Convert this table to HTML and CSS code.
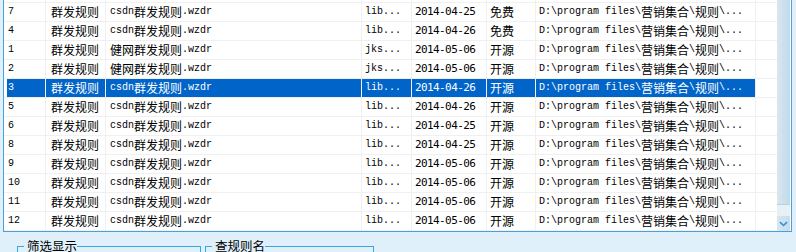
FILE: index.html
```html
<!DOCTYPE html>
<html lang="zh-CN">
<head>
<meta charset="utf-8">
<title>规则列表</title>
<link rel="stylesheet" href="styles.css">
</head>
<body>
<div class="listbox">
  <div class="rows">
    <div class="rows-inner">
      <div class="row"><div></div><div></div><div></div><div></div><div></div><div></div><div></div><div></div></div>
      <div class="row"><div>7</div><div><span class="c">群发规则</span></div><div>csdn<span class="c">群发规则</span>.wzdr</div><div>lib...</div><div><span class="d">2014-04-25</span></div><div><span class="c">免费</span></div><div>D:\program files\<span class="c">营销集合</span>\<span class="c">规则</span>\...</div><div></div></div>
      <div class="row"><div>4</div><div><span class="c">群发规则</span></div><div>csdn<span class="c">群发规则</span>.wzdr</div><div>lib...</div><div><span class="d">2014-04-26</span></div><div><span class="c">免费</span></div><div>D:\program files\<span class="c">营销集合</span>\<span class="c">规则</span>\...</div><div></div></div>
      <div class="row"><div>1</div><div><span class="c">群发规则</span></div><div><span class="c">健网群发规则</span>.wzdr</div><div>jks...</div><div><span class="d">2014-05-06</span></div><div><span class="c">开源</span></div><div>D:\program files\<span class="c">营销集合</span>\<span class="c">规则</span>\...</div><div></div></div>
      <div class="row"><div>2</div><div><span class="c">群发规则</span></div><div><span class="c">健网群发规则</span>.wzdr</div><div>jks...</div><div><span class="d">2014-05-06</span></div><div><span class="c">开源</span></div><div>D:\program files\<span class="c">营销集合</span>\<span class="c">规则</span>\...</div><div></div></div>
      <div class="row sel"><div>3</div><div><span class="c">群发规则</span></div><div>csdn<span class="c">群发规则</span>.wzdr</div><div>lib...</div><div><span class="d">2014-04-26</span></div><div><span class="c">开源</span></div><div>D:\program files\<span class="c">营销集合</span>\<span class="c">规则</span>\...</div><div></div></div>
      <div class="row"><div>5</div><div><span class="c">群发规则</span></div><div>csdn<span class="c">群发规则</span>.wzdr</div><div>lib...</div><div><span class="d">2014-04-26</span></div><div><span class="c">开源</span></div><div>D:\program files\<span class="c">营销集合</span>\<span class="c">规则</span>\...</div><div></div></div>
      <div class="row"><div>6</div><div><span class="c">群发规则</span></div><div>csdn<span class="c">群发规则</span>.wzdr</div><div>lib...</div><div><span class="d">2014-04-25</span></div><div><span class="c">开源</span></div><div>D:\program files\<span class="c">营销集合</span>\<span class="c">规则</span>\...</div><div></div></div>
      <div class="row"><div>8</div><div><span class="c">群发规则</span></div><div>csdn<span class="c">群发规则</span>.wzdr</div><div>lib...</div><div><span class="d">2014-04-25</span></div><div><span class="c">开源</span></div><div>D:\program files\<span class="c">营销集合</span>\<span class="c">规则</span>\...</div><div></div></div>
      <div class="row"><div>9</div><div><span class="c">群发规则</span></div><div>csdn<span class="c">群发规则</span>.wzdr</div><div>lib...</div><div><span class="d">2014-05-06</span></div><div><span class="c">开源</span></div><div>D:\program files\<span class="c">营销集合</span>\<span class="c">规则</span>\...</div><div></div></div>
      <div class="row"><div>10</div><div><span class="c">群发规则</span></div><div>csdn<span class="c">群发规则</span>.wzdr</div><div>lib...</div><div><span class="d">2014-05-06</span></div><div><span class="c">开源</span></div><div>D:\program files\<span class="c">营销集合</span>\<span class="c">规则</span>\...</div><div></div></div>
      <div class="row"><div>11</div><div><span class="c">群发规则</span></div><div>csdn<span class="c">群发规则</span>.wzdr</div><div>lib...</div><div><span class="d">2014-05-06</span></div><div><span class="c">开源</span></div><div>D:\program files\<span class="c">营销集合</span>\<span class="c">规则</span>\...</div><div></div></div>
      <div class="row"><div>12</div><div><span class="c">群发规则</span></div><div>csdn<span class="c">群发规则</span>.wzdr</div><div>lib...</div><div><span class="d">2014-05-06</span></div><div><span class="c">开源</span></div><div>D:\program files\<span class="c">营销集合</span>\<span class="c">规则</span>\...</div><div></div></div>
    </div>
  </div>
  <div class="scroll">
    <div class="thumb"></div>
    <div class="track"></div>
    <div class="btn"><svg width="9" height="6" viewBox="0 0 9 6"><path d="M1 1.2 L4.5 4.5 L8 1.2" fill="none" stroke="#3a8fd0" stroke-width="1.6"/></svg></div>
  </div>
</div>
<div class="groups">
  <fieldset class="g1"><legend>筛选显示</legend></fieldset>
  <fieldset class="g2"><legend>查规则名</legend></fieldset>
</div>
</body>
</html>
```
FILE: styles.css
```css
html, body {
  margin: 0;
  overflow: hidden;
}
body {
  width: 796px;
  height: 252px;
  background: #dff0fa;
}
.listbox {
  display: flex;
  margin: 0 4px 0 3px;
  height: 231px;
  border: 1px solid #4aa0d8;
  border-top: 0;
  background: #fff;
}
.rows {
  width: 773px;
  overflow: hidden;
}
.rows-inner {
  margin-top: -16px;
}
.row {
  display: grid;
  grid-template-columns: 42px 60px 256px 50px 75px 49px 220px 21px;
  height: 19px;
  box-sizing: border-box;
  border-bottom: 1px solid #f0f0f0;
}
.row > div {
  height: 18px;
  box-sizing: border-box;
  border-right: 1px solid #f0f0f0;
  padding-left: 3px;
  font: 10px/18px "Liberation Mono", monospace;
  color: #000;
  white-space: nowrap;
  overflow: hidden;
}
.row > div:nth-child(1) { padding-left: 4px; }
.row > div:nth-child(2) { padding-left: 5px; }
.row > div:nth-child(3) { padding-left: 4px; }
.row > div:last-child { border-right: 0; }
.row.sel > div:not(:last-child) {
  background: #0064c8;
  color: #fff;
}
.row.sel > div:first-child {
  background: linear-gradient(to right, #fff 3px, #0064c8 3px);
}
.c {
  font-family: "Noto Sans CJK SC", sans-serif;
  font-size: 12px;
  line-height: 12px;
  vertical-align: -3px;
}
.d {
  font-family: "DejaVu Sans Mono", monospace;
  font-size: 11px;
  line-height: 12px;
  letter-spacing: -0.6px;
  vertical-align: -1px;
}
.scroll {
  width: 13px;
  margin-right: 1px;
  display: flex;
  flex-direction: column;
}
.thumb {
  height: 205px;
  box-sizing: border-box;
  background: linear-gradient(to right, #d8e8f1, #c0d9e8);
  border-bottom: 1px solid #b6d1e2;
}
.track {
  flex: 1;
  background: #e7f0f5;
}
.btn {
  height: 15px;
  background: linear-gradient(to right, #d6e7f1, #c6dcea);
  display: flex;
  align-items: center;
  justify-content: center;
}
.groups {
  display: flex;
  gap: 4px;
  margin: 6px 0 0 17px;
}
fieldset {
  margin: 0;
  padding: 0 6px;
  height: 40px;
  min-width: 0;
  box-sizing: border-box;
  border: 1px solid #35a8e2;
}
.g1 { width: 184px; }
.g2 { width: 169px; }
legend {
  padding: 0 0 0 3px;
  font: 12.5px/16px "Noto Sans CJK SC", sans-serif;
  color: #000;
}
```
